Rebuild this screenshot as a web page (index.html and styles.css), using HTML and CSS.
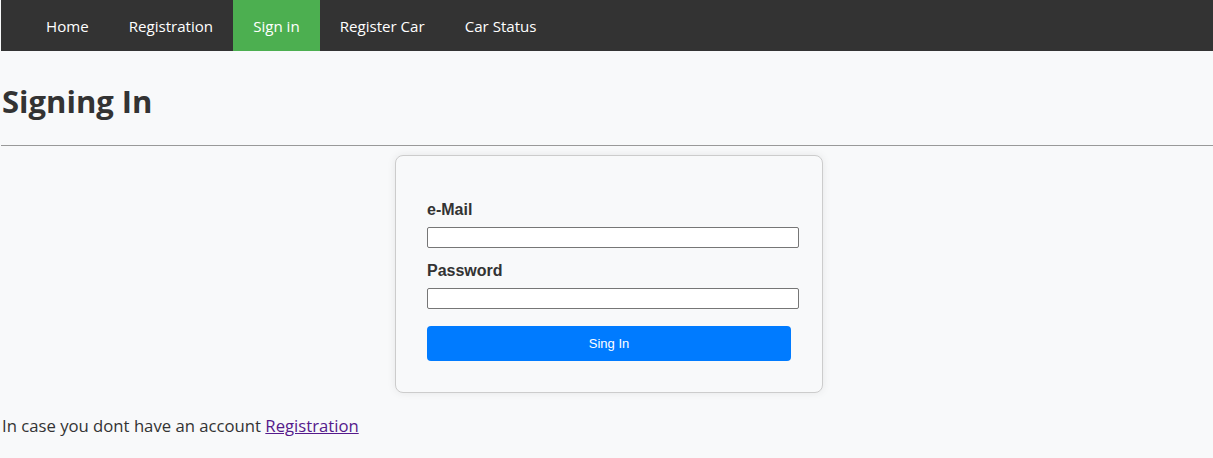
FILE: index.html
```html
<!DOCTYPE html>
<html>
<head>
<meta charset="utf-8">
<link rel="stylesheet" href="styles.css">
</head>
<body>
<nav class="topnav">
  <a href="#" class="nav-link">Home</a>
  <a href="#" class="nav-link">Registration</a>
  <a href="#" class="nav-link active">Sign in</a>
  <a href="#" class="nav-link">Register Car</a>
  <a href="#" class="nav-link">Car Status</a>
</nav>
<h1 class="page-title">Signing In</h1>
<hr class="divider">
<div class="card">
  <form class="form">
    <label class="label" for="email">e-Mail</label>
    <input class="input" type="text" id="email">
    <label class="label label-pw" for="pw">Password</label>
    <input class="input" type="password" id="pw">
    <button class="btn" type="button">Sing In</button>
  </form>
</div>
<p class="footer-text">In case you dont have an account <a href="#" class="reg-link">Registration</a></p>
</body>
</html>
```

FILE: styles.css
```css
html, body {
  margin: 0;
  padding: 0;
}
body {
  background: #f8f9fa;
  color: #333;
  font-family: "Open Sans", "Noto Sans", sans-serif;
  padding-left: 1px;
}
.topnav {
  display: flex;
  height: 51px;
  background: #333;
  padding-left: 25px;
}
.nav-link {
  display: flex;
  align-items: center;
  padding: 0 20px;
  color: #fff;
  text-decoration: none;
  font-size: 15.1px;
}
.nav-link.active {
  background: #4caf50;
}
.page-title {
  margin: 0;
  padding-top: 30px;
  font-size: 31px;
  line-height: 40px;
  font-weight: 700;
  color: #333;
  padding-left: 1px;
}
.divider {
  margin: 24px 0 9px 0;
  border: 0;
  border-top: 1px solid #999;
  height: 0;
}
.card {
  width: 364px;
  margin: 0 auto;
  padding: 45px 31px 31px 31px;
  border: 1px solid #ccc;
  border-radius: 8px;
  box-shadow: 0 0 8px rgba(0,0,0,0.08);
  background: #f8f9fa;
  position: relative;
  left: 2px;
}
.form {
  display: flex;
  flex-direction: column;
  align-items: flex-start;
}
.label {
  display: block;
  font-family: "Liberation Sans", Arial, sans-serif;
  font-weight: 700;
  font-size: 16px;
  line-height: 18px;
  margin-bottom: 8px;
  color: #333;
}
.label-pw {
  margin-top: 14px;
}
.input {
  height: 21px;
  padding: 0 3px;
  margin: 0;
  border: 1px solid #767676;
  border-radius: 2px;
  background: #fff;
  font-size: 13px;
  box-sizing: border-box;
  width: 372px;
}
.btn {
  margin-top: 17px;
  width: 364px;
  height: 35px;
  background: #007bff;
  color: #fff;
  border: 0;
  border-radius: 4px;
  font-family: "Liberation Sans", Arial, sans-serif;
  font-size: 13px;
}
.footer-text {
  margin: 22px 0 0 1px;
  font-size: 16.7px;
  line-height: 22px;
}
.reg-link {
  color: #551a8b;
}
```
